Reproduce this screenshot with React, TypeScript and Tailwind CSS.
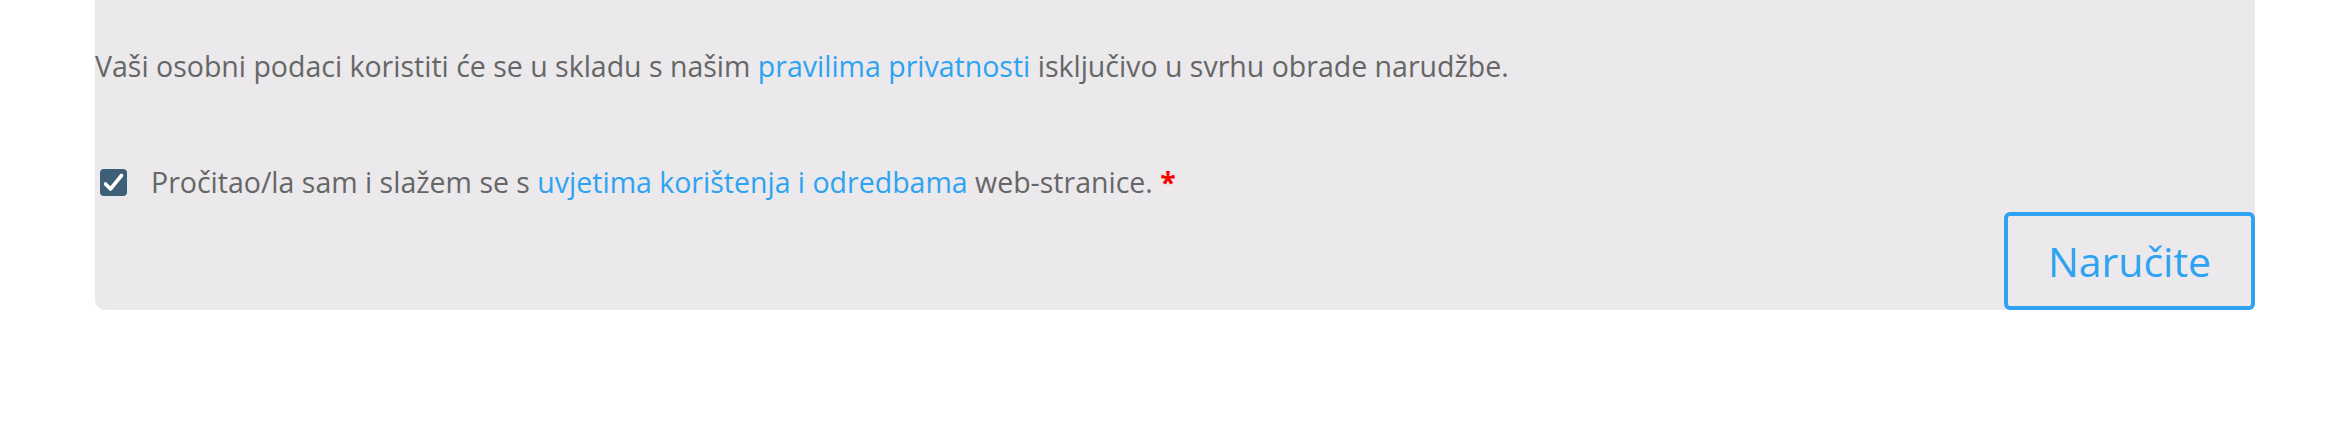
import React, { useState } from "react";

const App = () => {
  const [agreed, setAgreed] = useState(true);

  return (
    <div className="w-[2350px] h-[436px] bg-white font-['Open_Sans','Noto_Sans',sans-serif] text-[28.5px] leading-[1.67] text-[#666]">
      <div className="w-[2160px] mx-auto bg-[#ebe9ec] rounded-b-[10px] pt-[43px]">
        <p>
          Vaši osobni podaci koristiti će se u skladu s našim{" "}
          <a href="#" className="text-[#2ea3f2]">pravilima privatnosti</a>{" "}
          isključivo u svrhu obrade narudžbe.
        </p>

        <label className="mt-[68px] flex items-center cursor-pointer">
          {/* checkbox */}
          <span
            onClick={() => setAgreed(!agreed)}
            className="ml-[5px] w-[27px] h-[27px] rounded-[4px] bg-[#3d5f78] flex items-center justify-center"
          >
            {agreed && (
              <svg width="27" height="27" viewBox="0 0 27 27">
                <path d="M5.5 15 L10.5 20 L21.5 6.5" fill="none" stroke="#fff" strokeWidth="3.6" strokeLinecap="round" strokeLinejoin="round" />
              </svg>
            )}
          </span>
          <span className="ml-[24px]">
            Pročitao/la sam i slažem se s{" "}
            <a href="#" className="text-[#2ea3f2]">uvjetima korištenja i odredbama</a>{" "}
            web-stranice. <span className="text-[#ff0000] font-bold">*</span>
          </span>
        </label>

        <div className="flex justify-end mt-[6px]">
          <button
            type="button"
            className="w-[251px] h-[98px] border-[4px] border-[#2ea3f2] rounded-[6px] text-[41px] text-[#2ea3f2] leading-none flex items-center justify-center"
          >
            Naručite
          </button>
        </div>
      </div>
    </div>
  );
};

export default App;
